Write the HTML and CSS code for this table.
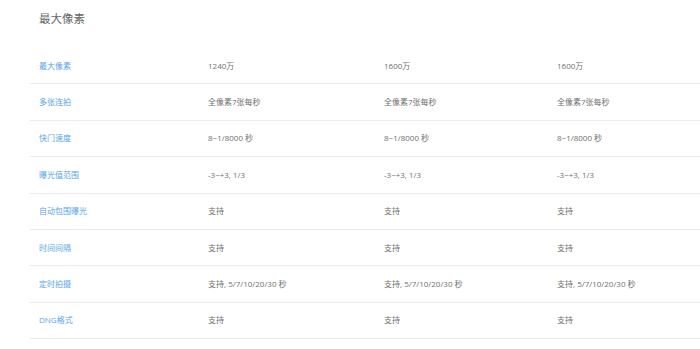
FILE: index.html
```html
<!DOCTYPE html>
<html lang="zh-CN">
<head>
<meta charset="utf-8">
<title>最大像素</title>
<link rel="stylesheet" href="styles.css">
</head>
<body>
<div class="page">
  <h2 class="title">最大像素</h2>
  <div class="table">
    <div class="row"><div class="cell label">最大像素</div><div class="cell">1240万</div><div class="cell">1600万</div><div class="cell">1600万</div></div>
    <div class="row"><div class="cell label">多张连拍</div><div class="cell">全像素7张每秒</div><div class="cell">全像素7张每秒</div><div class="cell">全像素7张每秒</div></div>
    <div class="row"><div class="cell label">快门速度</div><div class="cell">8~1/8000 秒</div><div class="cell">8~1/8000 秒</div><div class="cell">8~1/8000 秒</div></div>
    <div class="row"><div class="cell label">曝光值范围</div><div class="cell">-3~+3, 1/3</div><div class="cell">-3~+3, 1/3</div><div class="cell">-3~+3, 1/3</div></div>
    <div class="row"><div class="cell label">自动包围曝光</div><div class="cell">支持</div><div class="cell">支持</div><div class="cell">支持</div></div>
    <div class="row"><div class="cell label">时间间隔</div><div class="cell">支持</div><div class="cell">支持</div><div class="cell">支持</div></div>
    <div class="row"><div class="cell label">定时拍摄</div><div class="cell">支持, 5/7/10/20/30 秒</div><div class="cell">支持, 5/7/10/20/30 秒</div><div class="cell">支持, 5/7/10/20/30 秒</div></div>
    <div class="row"><div class="cell label">DNG格式</div><div class="cell">支持</div><div class="cell">支持</div><div class="cell">支持</div></div>
  </div>
</div>
</body>
</html>
```
FILE: styles.css
```css
html, body {
  margin: 0;
  padding: 0;
  background: #ffffff;
}
body {
  font-family: "Open Sans", "Noto Sans CJK SC", sans-serif;
  overflow: hidden;
}
.page {
  padding-left: 30px;
}
.title {
  margin: 0;
  padding: 11px 0 0 9px;
  height: 48px;
  box-sizing: border-box;
  font-size: 11.5px;
  font-weight: normal;
  line-height: 16px;
  color: #666666;
}
.table {
  display: flex;
  flex-direction: column;
}
.row {
  display: grid;
  grid-template-columns: 169px 176px 173px 1fr;
  height: 36.4px;
  box-sizing: border-box;
  border-bottom: 1px solid #ebebeb;
  align-items: center;
}
.cell {
  padding-left: 9px;
  font-size: 8px;
  line-height: 10px;
  color: #707070;
  white-space: nowrap;
}
.cell.label {
  color: #5aa5e6;
}
```
